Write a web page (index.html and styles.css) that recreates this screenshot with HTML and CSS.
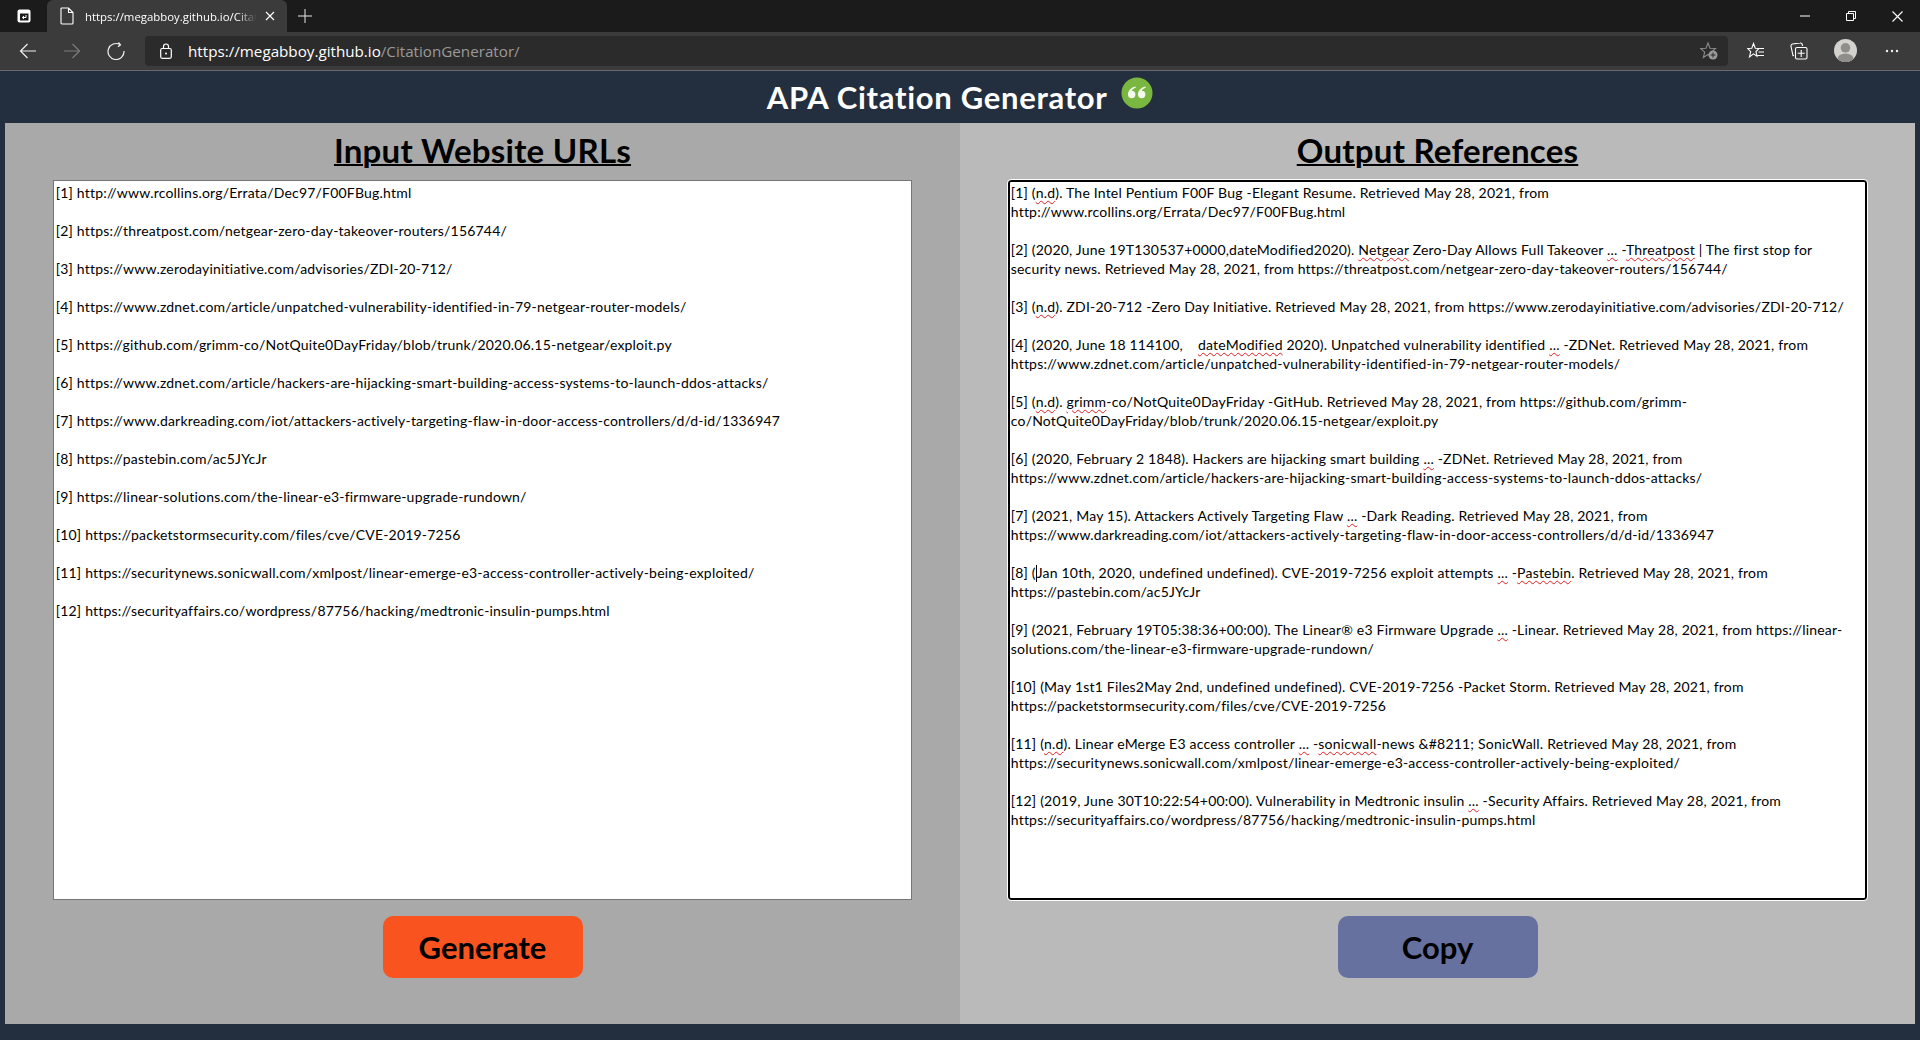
FILE: index.html
```html
<!DOCTYPE html>
<html lang="en">
<head>
<meta charset="utf-8">
<title>APA Citation Generator</title>
<link rel="stylesheet" href="styles.css">
</head>
<body>
<header class="browser">
  <div class="tabbar">
    <div class="tab-actions">
      <svg class="ic" width="16" height="16" viewBox="0 0 16 16"><rect x="1.500" y="1.500" width="13" height="13" rx="2" fill="#fff"/><rect x="4" y="5.500" width="8.500" height="7" fill="#1b1b1b"/><path d="M10 7v2.500H6.500M8 8 6.300 9.500 8 11" fill="none" stroke="#fff" stroke-width="1"/></svg>
    </div>
    <div class="tab">
      <svg class="ic" width="14" height="18" viewBox="0 0 14 18"><path d="M1.500 1h7l4.500 4.500V16a1 1 0 0 1-1 1H2a1 1 0 0 1-1-1V1.500zM8.500 1v4.500H13" fill="none" stroke="#fff" stroke-width="1.100"/></svg>
      <span class="tab-title">https://megabboy.github.io/CitationGenerator/</span>
      <svg class="ic" width="10" height="10" viewBox="0 0 10 10"><path d="M1 1l8 8M9 1l-8 8" stroke="#fff" stroke-width="1.200"/></svg>
    </div>
    <svg class="ic newtab" width="14" height="14" viewBox="0 0 14 14"><path d="M7 0v14M0 7h14" stroke="#e8e8e8" stroke-width="1"/></svg>
    <div class="win">
      <svg class="ic" width="10" height="2" viewBox="0 0 10 2"><path d="M0 1h10" stroke="#fff"/></svg>
      <svg class="ic" width="10" height="10" viewBox="0 0 10 10"><path d="M.5 2.500h7v7h-7zM2.500 2.500v-2h7v7h-2" fill="none" stroke="#fff"/></svg>
      <svg class="ic" width="11" height="11" viewBox="0 0 11 11"><path d="M.5.500l10 10M10.500.500l-10 10" stroke="#fff" stroke-width="1.100"/></svg>
    </div>
  </div>
  <div class="toolbar">
    <div class="nav">
      <svg class="ic" width="18" height="16" viewBox="0 0 18 16"><path d="M17 8H1.500M8.500 1 1.500 8l7 7" fill="none" stroke="#f0f0f0" stroke-width="1.200"/></svg>
      <svg class="ic" width="18" height="16" viewBox="0 0 18 16"><path d="M1 8h15.500M9.500 1l7 7-7 7" fill="none" stroke="#7c7c7c" stroke-width="1.200"/></svg>
      <svg class="ic" width="18" height="18" viewBox="0 0 18 18"><path d="M13 2.600A8 8 0 1 0 17 9M11.500.500l2 2.300-2.500 2" fill="none" stroke="#f0f0f0" stroke-width="1.200"/></svg>
    </div>
    <div class="address">
      <svg class="ic" width="12" height="16" viewBox="0 0 12 16"><rect x=".7" y="5.500" width="10.600" height="9.800" rx="1.500" fill="none" stroke="#fff" stroke-width="1.200"/><path d="M3.500 5.500V3.500a2.500 2.500 0 0 1 5 0v2" fill="none" stroke="#fff" stroke-width="1.200"/><circle cx="6" cy="10.500" r="1" fill="#fff"/></svg>
      <span class="url"><b>https://megabboy.github.io</b>/CitationGenerator/</span>
      <svg class="ic star-add" width="18" height="18" viewBox="0 0 18 18"><path d="M8 1l2 5.200 5.500.300-4.200 3.600 1.400 5.400L8 12.500l-4.700 3 1.400-5.400L.5 6.500 6 6.200z" fill="none" stroke="#8a8a8a" stroke-width="1.100"/><circle cx="13" cy="13" r="4.500" fill="#9a9a9a"/><path d="M13 10.500v5M10.500 13h5" stroke="#2b2b2b" stroke-width="1"/></svg>
    </div>
    <div class="tools">
      <svg class="ic" width="18" height="18" viewBox="0 0 18 18"><path d="M6.500 1.500l1.800 4.700 3.700.300-3 3 1 4.800-3.500-2.400-4 3 1.200-5.200L.8 6.500l4-.300zM11.500 6.500H17M11.500 10H17M10.500 13.500H17" fill="none" stroke="#fff" stroke-width="1.100"/></svg>
      <svg class="ic" width="18" height="18" viewBox="0 0 18 18"><path d="M4 13.500l-1 .200L1 4.500a2 2 0 0 1 1.500-2.500L10 1a2 2 0 0 1 2.300 1.500l.2 1.500" fill="none" stroke="#fff" stroke-width="1.100"/><rect x="5.500" y="5.500" width="11.500" height="11.500" rx="1.500" fill="none" stroke="#fff" stroke-width="1.100"/><path d="M11.200 8v7M7.700 11.200h7" stroke="#fff" stroke-width="1.100"/></svg>
      <svg class="ic avatar" width="23" height="23" viewBox="0 0 23 23"><defs><clipPath id="avatar-clip"><circle cx="11.500" cy="11.500" r="11.500"/></clipPath></defs><circle cx="11.500" cy="11.500" r="11.500" fill="#d3d2cd"/><g clip-path="url(#avatar-clip)"><circle cx="11.500" cy="8.800" r="4.800" fill="#8f8e8a"/><ellipse cx="11.500" cy="20" rx="8" ry="5.500" fill="#8f8e8a"/></g></svg>
      <svg class="ic" width="14" height="4" viewBox="0 0 14 4"><circle cx="2" cy="2" r="1.200" fill="#f0f0f0"/><circle cx="7" cy="2" r="1.200" fill="#f0f0f0"/><circle cx="12" cy="2" r="1.200" fill="#f0f0f0"/></svg>
    </div>
  </div>
</header>
<main class="page">
  <h1 class="title">APA Citation Generator <svg class="logo" width="32" height="32" viewBox="0 0 32 32"><circle cx="16" cy="16" r="15.500" fill="#7ab740"/><path d="M14.500 9.500C10 10.500 7 13.500 7 17.500a3.700 3.700 0 1 0 3.800-3.700c.5-1.300 2-2.500 4-3zM24.500 9.500c-4.500 1-7.500 4-7.500 8a3.700 3.700 0 1 0 3.800-3.700c.5-1.300 2-2.500 4-3z" fill="#f4f8ee"/></svg></h1>
  <div class="columns">
    <section class="col col-input">
      <h2 class="heading">Input Website URLs</h2>
      <div class="box">
        <p>[1] http://www.rcollins.org/Errata/Dec97/F00FBug.html</p>
        <p>[2] https://threatpost.com/netgear-zero-day-takeover-routers/156744/</p>
        <p>[3] https://www.zerodayinitiative.com/advisories/ZDI-20-712/</p>
        <p>[4] https://www.zdnet.com/article/unpatched-vulnerability-identified-in-79-netgear-router-models/</p>
        <p>[5] https://github.com/grimm-co/NotQuite0DayFriday/blob/trunk/2020.06.15-netgear/exploit.py</p>
        <p>[6] https://www.zdnet.com/article/hackers-are-hijacking-smart-building-access-systems-to-launch-ddos-attacks/</p>
        <p>[7] https://www.darkreading.com/iot/attackers-actively-targeting-flaw-in-door-access-controllers/d/d-id/1336947</p>
        <p>[8] https://pastebin.com/ac5JYcJr</p>
        <p>[9] https://linear-solutions.com/the-linear-e3-firmware-upgrade-rundown/</p>
        <p>[10] https://packetstormsecurity.com/files/cve/CVE-2019-7256</p>
        <p>[11] https://securitynews.sonicwall.com/xmlpost/linear-emerge-e3-access-controller-actively-being-exploited/</p>
        <p>[12] https://securityaffairs.co/wordpress/87756/hacking/medtronic-insulin-pumps.html</p>
      </div>
      <button class="btn btn-generate">Generate</button>
    </section>
    <section class="col col-output">
      <h2 class="heading">Output References</h2>
      <div class="box box-focus">
        <p>[1] (<u>n.d</u>). The Intel Pentium F00F Bug -Elegant Resume. Retrieved May 28, 2021, from<br>http://www.rcollins.org/Errata/Dec97/F00FBug.html</p>
        <p>[2] (2020, June 19T130537+0000,dateModified2020). <u>Netgear</u> Zero-Day Allows Full Takeover <u>...</u> -<u>Threatpost</u> | The first stop for<br>security news. Retrieved May 28, 2021, from https://threatpost.com/netgear-zero-day-takeover-routers/156744/</p>
        <p>[3] (<u>n.d</u>). ZDI-20-712 -Zero Day Initiative. Retrieved May 28, 2021, from https://www.zerodayinitiative.com/advisories/ZDI-20-712/</p>
        <p>[4] (2020, June 18 114100, &nbsp;&nbsp; <u>dateModified</u> 2020). Unpatched vulnerability identified <u>...</u> -ZDNet. Retrieved May 28, 2021, from<br>https://www.zdnet.com/article/unpatched-vulnerability-identified-in-79-netgear-router-models/</p>
        <p>[5] (<u>n.d</u>). <u>grimm</u>-co/NotQuite0DayFriday -GitHub. Retrieved May 28, 2021, from https://github.com/grimm-<br>co/NotQuite0DayFriday/blob/trunk/2020.06.15-netgear/exploit.py</p>
        <p>[6] (2020, February 2 1848). Hackers are hijacking smart building <u>...</u> -ZDNet. Retrieved May 28, 2021, from<br>https://www.zdnet.com/article/hackers-are-hijacking-smart-building-access-systems-to-launch-ddos-attacks/</p>
        <p>[7] (2021, May 15). Attackers Actively Targeting Flaw <u>...</u> -Dark Reading. Retrieved May 28, 2021, from<br>https://www.darkreading.com/iot/attackers-actively-targeting-flaw-in-door-access-controllers/d/d-id/1336947</p>
        <p>[8] (<span class="caret"></span>Jan 10th, 2020, undefined undefined). CVE-2019-7256 exploit attempts <u>...</u> -<u>Pastebin</u>. Retrieved May 28, 2021, from<br>https://pastebin.com/ac5JYcJr</p>
        <p>[9] (2021, February 19T05:38:36+00:00). The Linear® e3 Firmware Upgrade <u>...</u> -Linear. Retrieved May 28, 2021, from https://linear-<br>solutions.com/the-linear-e3-firmware-upgrade-rundown/</p>
        <p>[10] (May 1st1 Files2May 2nd, undefined undefined). CVE-2019-7256 -Packet Storm. Retrieved May 28, 2021, from<br>https://packetstormsecurity.com/files/cve/CVE-2019-7256</p>
        <p>[11] (<u>n.d</u>). Linear eMerge E3 access controller <u>...</u> -<u>sonicwall</u>-news &amp;#8211; SonicWall. Retrieved May 28, 2021, from<br>https://securitynews.sonicwall.com/xmlpost/linear-emerge-e3-access-controller-actively-being-exploited/</p>
        <p>[12] (2019, June 30T10:22:54+00:00). Vulnerability in Medtronic insulin <u>...</u> -Security Affairs. Retrieved May 28, 2021, from<br>https://securityaffairs.co/wordpress/87756/hacking/medtronic-insulin-pumps.html</p>
      </div>
      <button class="btn btn-copy">Copy</button>
    </section>
  </div>
</main>
</body>
</html>
```
FILE: styles.css
```css
* { box-sizing: border-box; }
html, body { margin: 0; height: 1040px; overflow: hidden; }
body {
  display: flex;
  flex-direction: column;
  background: #232f3f;
  font-family: "Lato", "Open Sans", sans-serif;
}
.ic { display: block; flex: none; }

.browser { flex: none; height: 71px; font-family: "Open Sans", "Liberation Sans", sans-serif; }
.tabbar { height: 32px; background: #1b1b1b; display: flex; align-items: center; }
.tab-actions { width: 47px; height: 32px; padding-left: 16px; display: flex; align-items: center; }
.tab {
  width: 240px; height: 32px; background: #3b3b3b; border-radius: 6px 6px 0 0;
  display: flex; align-items: center; padding: 0 12px 0 13px; color: #fff;
}
.tab-title {
  flex: 1; margin: 0 8px 0 11px; font-size: 11.400px; white-space: nowrap; overflow: hidden;
  -webkit-mask-image: linear-gradient(to right, #000 88%, transparent 100%);
  mask-image: linear-gradient(to right, #000 88%, transparent 100%);
}
.newtab { margin-left: 11px; }
.win { margin-left: auto; width: 138px; padding: 0 17px 0 18px; display: flex; align-items: center; justify-content: space-between; }
.toolbar {
  height: 39px; background: #3b3b3b; border-bottom: 1px solid #6a6a6a;
  display: flex; align-items: center; padding-bottom: 1px;
}
.nav { width: 145px; padding: 0 20px 0 19px; display: flex; align-items: center; justify-content: space-between; }
.address {
  width: 1583px; height: 30px; background: #2b2b2b; border-radius: 4px;
  display: flex; align-items: center; padding-left: 15px; padding-right: 10px;
}
.url { margin-left: 16px; font-size: 15.200px; color: #9a9a9a; }
.url b { font-weight: 400; color: #fff; }
.star-add { margin-left: auto; }
.tools { flex: 1; display: flex; align-items: center; padding: 0 21px 0 19px; justify-content: space-between; }
.avatar { margin-right: 3px; }

.page { flex: 1; display: flex; flex-direction: column; padding: 0 5px 16px; min-height: 0; }
.title {
  margin: 0; height: 52px; display: flex; align-items: center; justify-content: center; gap: 6px;
  color: #fff; font-size: 31px; font-weight: 700; white-space: pre; letter-spacing: .7px;
}
.logo { margin-top: -8px; }
.columns { flex: 1; display: grid; grid-template-columns: 1fr 1fr; min-height: 0; }
.col { display: flex; flex-direction: column; align-items: center; }
.col-input { background: #a9a9a9; }
.col-output { background: #bababa; }
.heading {
  margin: 0; height: 57px; padding-bottom: 4px; display: flex; align-items: center; justify-content: center;
  font-size: 33px; font-weight: 700; color: #000; letter-spacing: .25px;
  text-decoration: underline; text-decoration-thickness: 2px;
}
.box {
  width: 90%; height: 720px; background: #fff; border: 1px solid #767676;
  padding: 2px; font-size: 14px; line-height: 19px; letter-spacing: .2px; color: #000; overflow: hidden;
}
.box p { margin: 0 0 19px; white-space: nowrap; }
.box-focus { border: 2px solid #000; outline: 1px solid #fff; border-radius: 3px; padding: 1px; }
.box u { text-decoration: underline wavy #e02020 1px; text-underline-offset: 2px; }
.caret { display: inline-block; width: 1px; height: 17px; background: #000; vertical-align: -4px; }
.btn {
  width: 200px; height: 62px; margin-top: 16px; border: 0; border-radius: 10px;
  font: 700 31px "Lato", sans-serif; color: #000;
}
.btn-generate { background: #f9541f; }
.btn-copy { background: #6671a0; }
```
